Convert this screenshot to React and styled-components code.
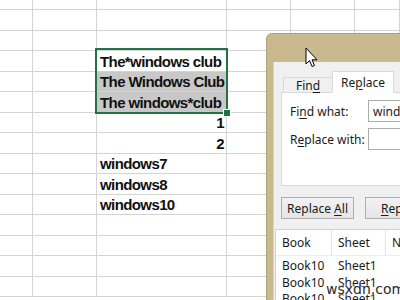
import React from "react";
import styled, { createGlobalStyle } from "styled-components";

const GlobalStyle = createGlobalStyle`
  html, body {
    margin: 0;
    padding: 0;
    width: 400px;
    height: 300px;
    overflow: hidden;
    background: #ffffff;
  }
`;

const Page = styled.div`
  position: relative;
  width: 400px;
  height: 300px;
  overflow: hidden;
  background: #ffffff;
`;

const Sheet = styled.div`
  position: relative;
  display: grid;
  grid-template-columns: 33px 64px 130px 64px 64px 1fr;
  grid-template-rows: 10px;
  grid-auto-rows: 20.5px;
`;

const Cell = styled.div`
  box-sizing: border-box;
  border-right: 1px solid #d4d4d4;
  border-bottom: 1px solid #d4d4d4;
  background: ${(p) => (p.$shade ? "#c8c8c8" : "#ffffff")};
  display: flex;
  align-items: center;
  justify-content: ${(p) => (p.$align === "right" ? "flex-end" : "flex-start")};
  padding: 1px 2px 0 3px;
  font-family: "Liberation Sans", Arial, sans-serif;
  font-weight: bold;
  font-size: 15px;
  letter-spacing: -0.6px;
  color: #111111;
  white-space: nowrap;
  overflow: hidden;
`;

const Selection = styled.div`
  position: absolute;
  left: 95px;
  top: 48px;
  width: 133px;
  height: 66px;
  box-sizing: border-box;
  border: 2px solid #217346;
  pointer-events: none;
`;

const FillHandle = styled.div`
  position: absolute;
  right: -5px;
  bottom: -5px;
  width: 6px;
  height: 6px;
  background: #217346;
  border: 1px solid #ffffff;
`;

const Dialog = styled.div`
  position: absolute;
  left: 266px;
  top: 33px;
  width: 200px;
  height: 300px;
  box-sizing: border-box;
  background: #c9b98e;
  border: 1px solid #b0a274;
  border-radius: 6px 0 0 0;
  padding: 28px 0 0 6px;
  display: flex;
`;

const Client = styled.div`
  flex: 1;
  background: #f0f0f0;
  border-left: 1px solid #ddd4b8;
  padding: 9px 0 0 7px;
  display: flex;
  flex-direction: column;
  font-family: "Noto Sans", "Open Sans", sans-serif;
  font-size: 12px;
  color: #1a1a1a;
`;

const TabRow = styled.div`
  display: flex;
  align-items: flex-end;
  padding-left: 2px;
  margin-bottom: -1px;
  position: relative;
  z-index: 1;
`;

const Tab = styled.div`
  box-sizing: border-box;
  height: ${(p) => (p.$active ? "22px" : "16px")};
  width: ${(p) => p.$w}px;
  display: flex;
  align-items: center;
  justify-content: center;
  background: ${(p) => (p.$active ? "#ffffff" : "#f0f0f0")};
  border: 1px solid #d9d9d9;
  border-bottom: ${(p) => (p.$active ? "1px solid #ffffff" : "1px solid #d9d9d9")};
  margin-right: ${(p) => (p.$active ? "0" : "-1px")};
  padding-top: ${(p) => (p.$active ? "0" : "1px")};
`;

const Panel = styled.div`
  box-sizing: border-box;
  height: 94px;
  background: #ffffff;
  border: 1px solid #d9d9d9;
  border-right: none;
  padding: 7px 0 0 8px;
  display: flex;
  flex-direction: column;
  gap: 6px;
`;

const FieldRow = styled.div`
  display: flex;
  align-items: center;
  height: 22px;
`;

const Label = styled.div`
  width: 78px;
  white-space: nowrap;
`;

const Input = styled.div`
  flex: 1;
  height: 22px;
  box-sizing: border-box;
  border: 1px solid #acacac;
  border-right: none;
  padding: 0 0 0 4px;
  display: flex;
  align-items: center;
  white-space: nowrap;
  overflow: hidden;
`;

const ButtonRow = styled.div`
  display: flex;
  gap: 11px;
  margin-top: 11px;
`;

const Button = styled.div`
  box-sizing: border-box;
  height: 22px;
  width: ${(p) => p.$w}px;
  flex-shrink: 0;
  display: flex;
  align-items: center;
  justify-content: ${(p) => (p.$left ? "flex-start" : "center")};
  padding-left: ${(p) => (p.$left ? "15px" : "0")};
  background: linear-gradient(#f2f2f2, #e5e5e5);
  border: 1px solid #adadad;
  white-space: nowrap;
`;

const List = styled.div`
  margin: 10px 0 0 -6px;
  background: #ffffff;
  border-left: 1px solid #d0d0d0;
  border-top: 1px solid #d0d0d0;
  flex: 1;
`;

const ListRow = styled.div`
  display: grid;
  grid-template-columns: 56px 54px 1fr;
  height: ${(p) => (p.$header ? "25px" : "16.5px")};
  align-items: center;
  border-bottom: ${(p) => (p.$header ? "1px solid #ededed" : "none")};
  margin-bottom: ${(p) => (p.$header ? "1px" : "0")};
`;

const ListCell = styled.div`
  height: 100%;
  display: flex;
  align-items: center;
  padding-left: 6px;
  white-space: nowrap;
  border-right: ${(p) => (p.$sep ? "1px solid #e5e5e5" : "none")};
`;

const Watermark = styled.div`
  position: absolute;
  left: 326px;
  top: 281px;
  font-family: "DejaVu Sans", sans-serif;
  font-size: 14px;
  color: #2a2a2a;
  text-shadow: 0 0 2px #ffffff, 0 0 2px #ffffff;
`;

const Cursor = styled.svg`
  position: absolute;
  left: 305px;
  top: 47px;
`;

const U = styled.span`
  text-decoration: underline;
  text-underline-offset: 2px;
`;

const rows = [
  {},
  {},
  {},
  { text: "The*windows club" },
  { text: "The Windows Club", shade: true },
  { text: "The windows*club", shade: true },
  { text: "1", align: "right" },
  { text: "2", align: "right" },
  { text: "windows7" },
  { text: "windows8" },
  { text: "windows10" },
  {},
  {},
  {},
  {},
];

export default function App() {
  return (
    <Page>
      <GlobalStyle />
      <Sheet>
        {rows.map((r, i) =>
          [0, 1, 2, 3, 4, 5].map((c) => (
            <Cell
              key={`${i}-${c}`}
              $shade={c === 2 && r.shade}
              $align={c === 2 ? r.align : undefined}
            >
              {c === 2 ? r.text : null}
            </Cell>
          ))
        )}
        <Selection>
          <FillHandle />
        </Selection>
      </Sheet>

      <Dialog>
        <Client>
          <TabRow>
            <Tab $w={50}>
              Fin<U>d</U>
            </Tab>
            <Tab $w={62} $active>
              Re<U>p</U>lace
            </Tab>
          </TabRow>
          <Panel>
            <FieldRow>
              <Label>
                Fi<U>n</U>d what:
              </Label>
              <Input>windows</Input>
            </FieldRow>
            <FieldRow>
              <Label>
                R<U>e</U>place with:
              </Label>
              <Input />
            </FieldRow>
          </Panel>
          <ButtonRow>
            <Button $w={73}>
              Replace&nbsp;<U>A</U>ll
            </Button>
            <Button $w={73} $left>
              <U>R</U>eplace
            </Button>
          </ButtonRow>
          <List>
            <ListRow $header>
              <ListCell $sep>Book</ListCell>
              <ListCell $sep>Sheet</ListCell>
              <ListCell>Name</ListCell>
            </ListRow>
            {[0, 1, 2].map((i) => (
              <ListRow key={i}>
                <ListCell>Book10</ListCell>
                <ListCell>Sheet1</ListCell>
                <ListCell />
              </ListRow>
            ))}
          </List>
        </Client>
      </Dialog>

      <Cursor width="13" height="21" viewBox="0 0 13 21">
        <path
          d="M1 1 L1 17 L4.5 13.5 L7 19.5 L9.5 18.5 L7 12.8 L12 12.8 Z"
          fill="#ffffff"
          stroke="#000000"
          strokeWidth="1"
          strokeLinejoin="miter"
        />
      </Cursor>

      <Watermark>wsxdn.com</Watermark>
    </Page>
  );
}
